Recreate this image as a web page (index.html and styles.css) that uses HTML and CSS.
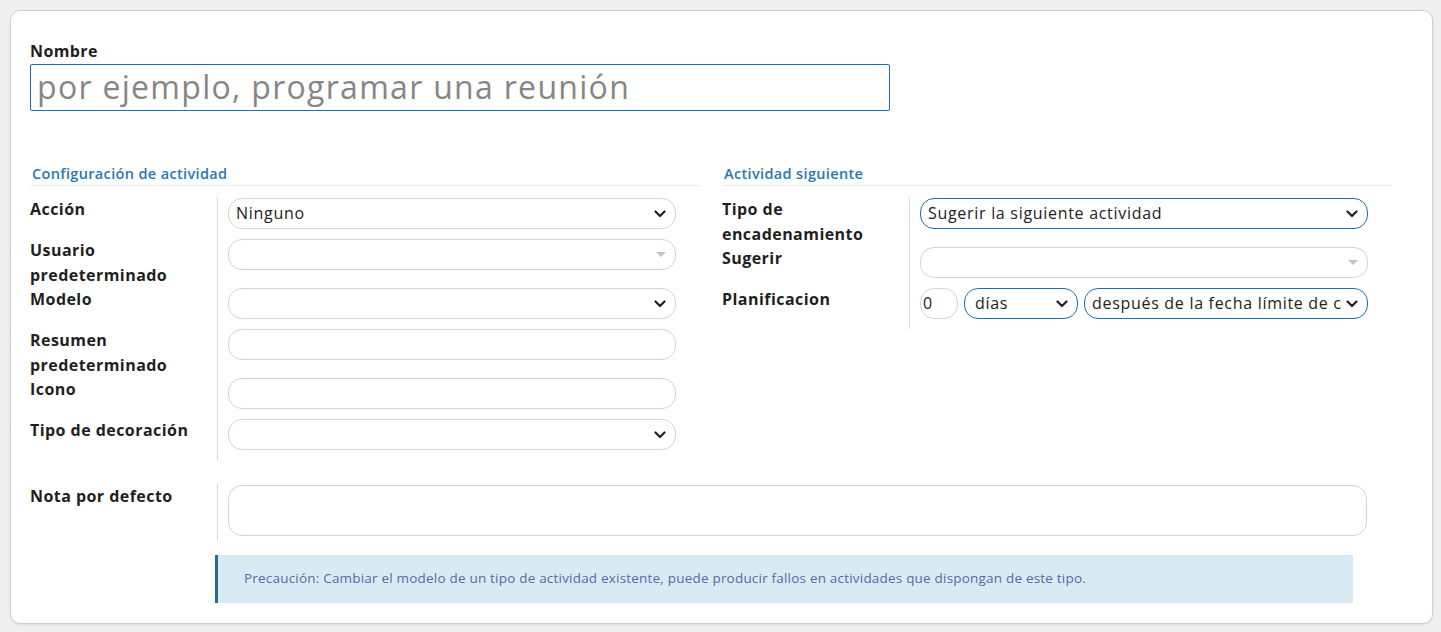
FILE: index.html
```html
<!DOCTYPE html>
<html lang="es">
<head>
<meta charset="utf-8">
<title>Tipo de actividad</title>
<link rel="stylesheet" href="styles.css">
</head>
<body>
<div class="card">
  <div class="title-field">
    <div class="title-label">Nombre</div>
    <div class="title-input">por ejemplo, programar una reunión</div>
  </div>

  <div class="groups">
    <div class="group">
      <div class="group-title">Configuración de actividad</div>
      <div class="rows">
        <div class="lbl">Acción</div>
        <div class="fld"><div class="ctl select"><span class="val">Ninguno</span><svg class="chev" width="12" height="8" viewBox="0 0 12 8"><path d="M1.5 1.5 L6 6 L10.5 1.5" fill="none" stroke="#222" stroke-width="2.2" stroke-linecap="round" stroke-linejoin="round"/></svg></div></div>

        <div class="lbl">Usuario<br>predeterminado</div>
        <div class="fld"><div class="ctl select"><span class="val"></span><svg class="caret" width="10" height="5" viewBox="0 0 10 5"><path d="M0 0 H10 L5 5 Z" fill="#c4c4c4"/></svg></div></div>

        <div class="lbl">Modelo</div>
        <div class="fld"><div class="ctl select"><span class="val"></span><svg class="chev" width="12" height="8" viewBox="0 0 12 8"><path d="M1.5 1.5 L6 6 L10.5 1.5" fill="none" stroke="#222" stroke-width="2.2" stroke-linecap="round" stroke-linejoin="round"/></svg></div></div>

        <div class="lbl">Resumen<br>predeterminado</div>
        <div class="fld"><div class="ctl"></div></div>

        <div class="lbl">Icono</div>
        <div class="fld"><div class="ctl"></div></div>

        <div class="lbl">Tipo de decoración</div>
        <div class="fld"><div class="ctl select"><span class="val"></span><svg class="chev" width="12" height="8" viewBox="0 0 12 8"><path d="M1.5 1.5 L6 6 L10.5 1.5" fill="none" stroke="#222" stroke-width="2.2" stroke-linecap="round" stroke-linejoin="round"/></svg></div></div>
      </div>
    </div>

    <div class="group">
      <div class="group-title">Actividad siguiente</div>
      <div class="rows">
        <div class="lbl">Tipo de<br>encadenamiento</div>
        <div class="fld"><div class="ctl select blue"><span class="val">Sugerir la siguiente actividad</span><svg class="chev" width="12" height="8" viewBox="0 0 12 8"><path d="M1.5 1.5 L6 6 L10.5 1.5" fill="none" stroke="#222" stroke-width="2.2" stroke-linecap="round" stroke-linejoin="round"/></svg></div></div>

        <div class="lbl">Sugerir</div>
        <div class="fld"><div class="ctl select"><span class="val"></span><svg class="caret" width="10" height="5" viewBox="0 0 10 5"><path d="M0 0 H10 L5 5 Z" fill="#c4c4c4"/></svg></div></div>

        <div class="lbl">Planificacion</div>
        <div class="fld">
          <div class="plan">
            <div class="ctl num">0</div>
            <div class="ctl select blue unit"><span class="val">días</span><svg class="chev" width="12" height="8" viewBox="0 0 12 8"><path d="M1.5 1.5 L6 6 L10.5 1.5" fill="none" stroke="#222" stroke-width="2.2" stroke-linecap="round" stroke-linejoin="round"/></svg></div>
            <div class="ctl select blue from"><span class="val">después de la fecha límite de c</span><svg class="chev" width="12" height="8" viewBox="0 0 12 8"><path d="M1.5 1.5 L6 6 L10.5 1.5" fill="none" stroke="#222" stroke-width="2.2" stroke-linecap="round" stroke-linejoin="round"/></svg></div>
          </div>
        </div>
      </div>
    </div>
  </div>

  <div class="note-row">
    <div class="lbl">Nota por defecto</div>
    <div class="fld note-fld"><div class="ctl textarea"></div></div>
  </div>

  <div class="alert">Precaución: Cambiar el modelo de un tipo de actividad existente, puede producir fallos en actividades que dispongan de este tipo.</div>
</div>
</body>
</html>
```
FILE: styles.css
```css
* { box-sizing: border-box; }

html, body {
  margin: 0;
  padding: 0;
}

body {
  background: #efefef;
  font-family: "Open Sans", "Noto Sans", sans-serif;
  color: #1f1f1f;
  height: 632px;
  overflow: hidden;
}

.card {
  margin: 10px 8px 0 10px;
  width: 1423px;
  height: 614px;
  background: #ffffff;
  border: 1px solid #cfcfcf;
  border-radius: 10px;
  box-shadow: 0 1px 2px rgba(0, 0, 0, 0.08);
  padding: 28px 41px 0 19px;
}

.title-label {
  font-size: 16px;
  font-weight: 700;
  line-height: 25px;
  letter-spacing: 0.4px;
  color: #1f1f1f;
}

.title-input {
  width: 860px;
  height: 47px;
  border: 1px solid #1e6fa6;
  border-radius: 2px;
  font-size: 32px;
  line-height: 44px;
  padding-left: 6px;
  color: #868686;
  letter-spacing: 1.3px;
}

.groups {
  display: grid;
  grid-template-columns: 670px 670px;
  column-gap: 22px;
  margin-top: 53px;
}

.group-title {
  font-size: 14.5px;
  font-weight: 600;
  letter-spacing: 0.35px;
  color: #2878b2;
  line-height: 20px;
  padding: 0 0 1px 2px;
  border-bottom: 1px solid #ececec;
  margin-bottom: 12px;
}

.rows {
  display: grid;
  grid-template-columns: 188px 1fr;
}

.lbl {
  font-size: 16px;
  font-weight: 700;
  line-height: 25px;
  letter-spacing: 0.45px;
  color: #1f1f1f;
  border-right: 1px solid #dcdcdc;
  margin-top: -1px;
}

.fld {
  padding: 0 24px 10px 10px;
}

.ctl {
  height: 31px;
  border: 1px solid #d4d4d4;
  border-radius: 14px;
  background: #fff;
  font-size: 16px;
  line-height: 29px;
  letter-spacing: 0.7px;
  color: #222;
  padding: 0 8px 0 7px;
}

.select {
  display: flex;
  align-items: center;
  justify-content: space-between;
}

.select .val {
  white-space: nowrap;
  overflow: hidden;
}

.blue {
  border-color: #1e6fa6;
}

.chev { flex: none; margin-right: 1px; }
.caret { flex: none; margin-right: 1px; }

.plan {
  display: flex;
  gap: 6px;
}

.num {
  width: 38px;
  flex: none;
  padding-left: 2px;
  border-color: #d4d4d4;
}

.unit {
  width: 114px;
  flex: none;
  padding-left: 10px;
}

.from {
  flex: 1;
  min-width: 0;
  padding-left: 7px;
}

.note-row {
  display: grid;
  grid-template-columns: 188px 1fr;
  margin-top: 25px;
}

.note-fld {
  padding-bottom: 5px;
}

.textarea {
  height: 51px;
}

.alert {
  margin: 14px 38px 0 185px;
  height: 48px;
  background: #d8ebf5;
  border-left: 3px solid #2c6b8e;
  color: #5a68a4;
  font-size: 13.5px;
  letter-spacing: 0.2px;
  line-height: 47px;
  padding-left: 26px;
  white-space: nowrap;
}
```
